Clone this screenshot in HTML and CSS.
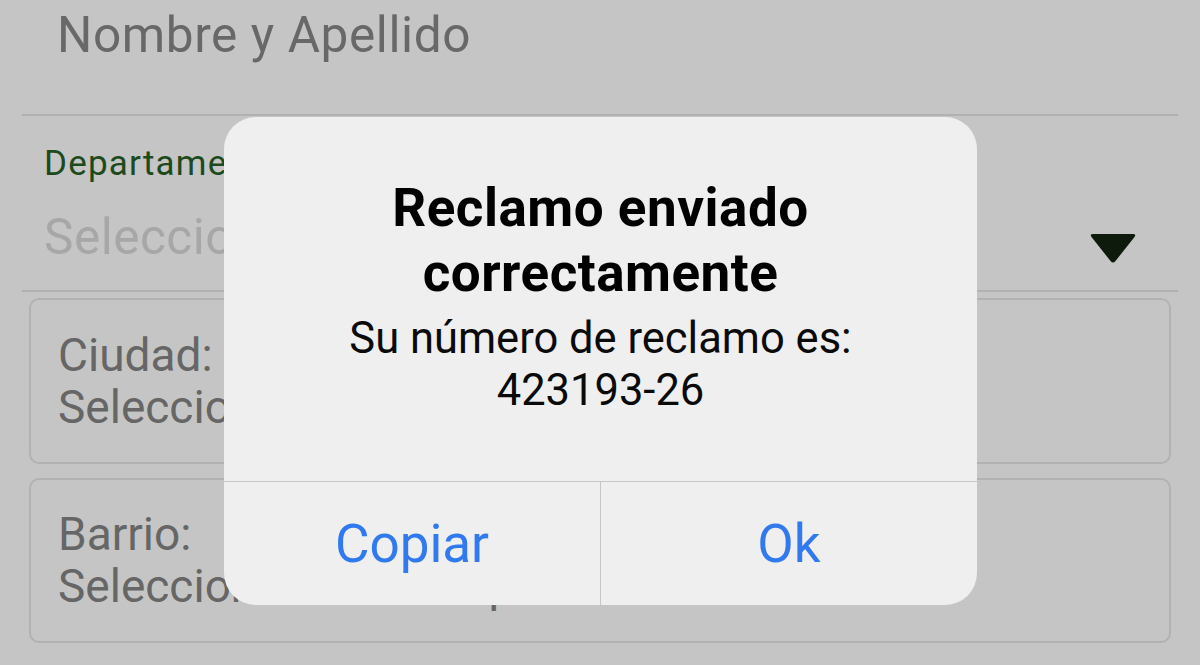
FILE: index.html
```html
<!DOCTYPE html>
<html lang="es">
<head>
<meta charset="utf-8">
<title>Reclamo</title>
<link rel="stylesheet" href="styles.css">
</head>
<body>
<div class="form">
  <div class="field name-field">
    <div class="placeholder">Nombre y Apellido</div>
  </div>
  <div class="field dept-field">
    <div class="dept-text">
      <div class="dept-label">Departamento</div>
      <div class="dept-value">Seleccione departamento</div>
    </div>
    <svg class="caret" width="48" height="30" viewBox="0 0 48 30" aria-hidden="true">
      <path d="M4 1 H44 Q47.5 1 45.5 4 L26.5 28 Q24 31 21.5 28 L2.5 4 Q0.5 1 4 1 Z" fill="#0e1a0b"/>
    </svg>
  </div>
  <div class="box">
    <div class="box-line">Ciudad:</div>
    <div class="box-line">Seleccione departamento primero</div>
  </div>
  <div class="box box-second">
    <div class="box-line">Barrio:</div>
    <div class="box-line">Seleccione la ciudad primero</div>
  </div>
</div>

<div class="alert" role="alertdialog">
  <div class="alert-body">
    <div class="alert-title">Reclamo enviado<br>correctamente</div>
    <div class="alert-msg">Su número de reclamo es:<br>423193-26</div>
  </div>
  <div class="alert-actions">
    <div class="alert-btn">Copiar</div>
    <div class="alert-btn">Ok</div>
  </div>
</div>
</body>
</html>
```

FILE: styles.css
```css
html, body {
  margin: 0;
  padding: 0;
}
body {
  width: 1200px;
  height: 665px;
  overflow: hidden;
  background: #c5c5c5;
  font-family: Roboto, "Liberation Sans", sans-serif;
  position: relative;
}
.form {
  padding: 0 22px;
}
.field {
  box-sizing: border-box;
  border-bottom: 2px solid #b3b0b0;
}
.name-field {
  height: 116px;
  padding: 7px 0 0 35px;
}
.placeholder {
  font-size: 49.5px;
  line-height: 56px;
  letter-spacing: 0.6px;
  color: #686868;
}
.dept-field {
  height: 176px;
  padding: 28px 41px 0 22px;
  display: flex;
  justify-content: space-between;
  align-items: flex-start;
}
.dept-label {
  font-size: 35px;
  line-height: 40px;
  letter-spacing: 1.2px;
  color: #1d4a1c;
}
.dept-value {
  margin-top: 25px;
  font-size: 49.5px;
  line-height: 56px;
  letter-spacing: 0.5px;
  color: #a7a7a7;
  white-space: nowrap;
}
.caret {
  margin-top: 89px;
  display: block;
}
.box {
  box-sizing: border-box;
  margin: 6px 7px 0 7px;
  height: 166px;
  border: 2px solid #b4b1b1;
  border-radius: 10px;
  padding: 29px 0 0 27px;
}
.box-second {
  margin-top: 14px;
  height: 165px;
  padding-top: 28px;
}
.box-line {
  font-size: 46px;
  line-height: 52px;
  color: #666666;
  white-space: nowrap;
}

/* alert overlay */
.alert {
  position: absolute;
  left: 224px;
  top: 117px;
  width: 753px;
  height: 488px;
  background: #efefef;
  border-radius: 32px;
  display: flex;
  flex-direction: column;
  overflow: hidden;
}
.alert-body {
  flex: 1;
  padding-top: 59px;
  text-align: center;
  color: #000;
}
.alert-title {
  font-size: 53px;
  line-height: 65px;
  letter-spacing: 0.5px;
  font-weight: 700;
}
.alert-msg {
  margin-top: 7px;
  font-size: 43.5px;
  line-height: 52px;
  color: #0a0a0a;
}
.alert-actions {
  height: 123px;
  border-top: 1px solid #c6c6c6;
  display: flex;
}
.alert-btn {
  flex: 1;
  display: flex;
  align-items: center;
  justify-content: center;
  font-size: 53px;
  color: #3179ef;
}
.alert-btn + .alert-btn {
  border-left: 1px solid #c6c6c6;
}
```
